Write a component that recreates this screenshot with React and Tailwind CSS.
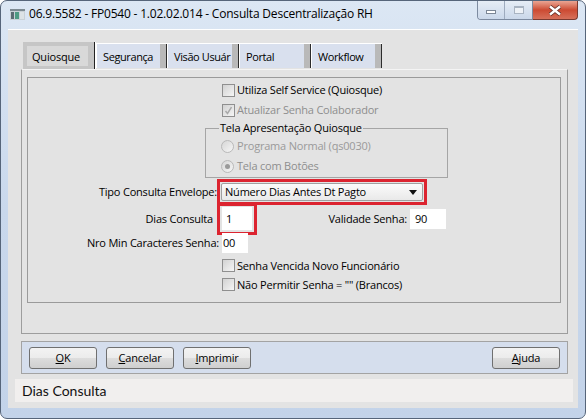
import React from 'react';

const TABS = [
  { label: 'Segurança', w: 'w-[71px]' },
  { label: 'Visão Usuár', w: 'w-[72px]' },
  { label: 'Portal', w: 'w-[72px]' },
  { label: 'Workflow', w: 'w-[71px]' },
];

function Check({ checked, disabled }) {
  return (
    <span className="w-[13px] h-[13px] shrink-0 border border-[#8f8f8f] bg-linear-to-br from-[#d2d2d2] to-[#f5f5f5] flex items-center justify-center">
      {checked && (
        <svg width="9" height="9" viewBox="0 0 9 9">
          <path d="M1.5 5 L3.5 7.5 L7.5 1.2" stroke={disabled ? '#a8a8a8' : '#333'} strokeWidth="1.5" fill="none" />
        </svg>
      )}
    </span>
  );
}

function Radio({ selected }) {
  return (
    <span className="w-[13px] h-[13px] shrink-0 rounded-full border border-[#b9b9b9] bg-linear-to-br from-[#d6d6d6] to-[#f6f6f6] flex items-center justify-center">
      {selected && <span className="w-[5px] h-[5px] rounded-full bg-[#9a9a9a]" />}
    </span>
  );
}

function CheckRow({ label, checked, disabled, className }) {
  return (
    <div className={'flex items-center gap-[2px] ml-[194px] ' + className}>
      <Check checked={checked} disabled={disabled} />
      <span className={disabled ? 'text-[#8e8e8e]' : 'text-black'}>{label}</span>
    </div>
  );
}

function Button({ children, className = '' }) {
  return (
    <div className={'w-[68px] h-[22px] rounded-[3px] border border-[#707070] bg-[linear-gradient(#f3f3f3,#ebebeb_50%,#dddddd_50%,#cfcfcf)] flex items-center justify-center text-black ' + className}>
      {children}
    </div>
  );
}

function Tab({ label, w }) {
  return (
    <div className={'flex h-[25px] mt-[1px] border-t border-l border-white bg-[#d9e0ee] ' + w}>
      <span className="flex-1 whitespace-nowrap pl-[6px] pt-[5px] tracking-[-0.4px]">{label}</span>
      <span className="w-[6px] bg-[#b9b9b9]" />
      <span className="w-[1px] bg-[#2c2c2c]" />
    </div>
  );
}

export default function App() {
  return (
    <div className="w-[588px] h-[420px] bg-white overflow-hidden font-['Open_Sans',sans-serif] text-[11px] tracking-[-0.2px] leading-[16px] text-black">
      <div className="w-[586px] h-[419px] rounded-[7px] border border-[#56657a] bg-linear-to-b from-[#dce7f4] via-[#c9d8ec] to-[#c3d3e9] flex flex-col">
        {/* title bar */}
        <div className="h-[28px] flex items-start pl-[9px] pr-[7px]">
          <svg width="15" height="11" viewBox="0 0 15 11" className="mt-[8px] shrink-0">
            <rect x="0" y="0" width="15" height="11" fill="#c9d1d6" />
            <rect x="0" y="0" width="15" height="2" fill="#7d8a92" />
            <rect x="1" y="3" width="3" height="7" fill="#5b6b72" />
            <rect x="5" y="3" width="4" height="7" fill="#4e9a82" />
            <rect x="10" y="3" width="4" height="7" fill="#dde3e6" />
          </svg>
          <span className="ml-[4px] mt-[4px] text-[12px] tracking-[-0.2px] leading-[18px] whitespace-nowrap">06.9.5582 - FP0540 - 1.02.02.014 - Consulta Descentralização RH</span>
          <div className="ml-auto flex">
            <div className="flex h-[19px] border border-t-0 border-[#7d8ba0] rounded-bl-[4px] overflow-hidden">
              <div className="w-[26px] bg-linear-to-b from-[#e6edf6] to-[#cbd8ea] flex items-center justify-center">
                <span className="mt-[4px] w-[10px] h-[4px] border border-[#7c8796] bg-white" />
              </div>
              <div className="w-[28px] border-l border-[#9eabbe] bg-linear-to-b from-[#e6edf6] to-[#cbd8ea] flex items-center justify-center">
                <span className="w-[10px] h-[8px] border border-[#a9b4c2] border-t-2 bg-[#eef2f7]" />
              </div>
            </div>
            <div className="w-[45px] h-[19px] border border-t-0 border-l-0 border-[#7a3a30] rounded-br-[4px] bg-linear-to-b from-[#e9a593] via-[#cc4a32] to-[#d6705a] flex items-center justify-center">
              <svg width="14" height="11" viewBox="0 0 14 11">
                <path d="M2 1.5 L12 9.5 M12 1.5 L2 9.5" stroke="#5a2a22" strokeWidth="4" />
                <path d="M2 1.5 L12 9.5 M12 1.5 L2 9.5" stroke="#ffffff" strokeWidth="2.4" />
              </svg>
            </div>
          </div>
        </div>

        {/* client */}
        <div className="mx-[7px] h-[379px] bg-[#e3e3e3] border-t border-white flex flex-col">
          {/* tab strip */}
          <div className="flex h-[27px] mt-[12px] ml-[15px]">
            <div className="flex w-[73px] h-[27px]">
              <div className="flex-1 bg-[#c6c6c6] pt-[4px] pl-[4px] pr-[6px] pb-[3px]">
                <div className="h-full bg-[#d9d9d9] pl-[5px] pt-[3px]">Quiosque</div>
              </div>
              <span className="w-[1px] bg-[#222]" />
              <span className="w-[1px] bg-white" />
            </div>
            {TABS.map((t) => <Tab key={t.label} label={t.label} w={t.w} />)}
          </div>

          {/* tab panel */}
          <div className="ml-[13px] w-[547px] h-[265px] border border-[#9d9d9d] border-t-[#f4f4f4] pt-[7px] pl-[5px]">
            <div className="w-[534px] h-[226px] border border-[#9a9a9a] pt-[2px]">
              <CheckRow className="h-[20px]" label="Utiliza Self Service (Quiosque)" />
              <CheckRow className="h-[20px]" label="Atualizar Senha Colaborador" checked disabled />

              <fieldset className="ml-[177px] w-[243px] h-[58px] border border-[#a5a5a5]">
                <legend className="ml-[13px] px-[1px] leading-[16px]">Tela Apresentação Quiosque</legend>
                <div className="flex items-center gap-[3px] h-[20px] ml-[15px] text-[#9a9a9a]">
                  <Radio />
                  <span>Programa Normal (qs0030)</span>
                </div>
                <div className="flex items-center gap-[3px] h-[20px] ml-[15px] text-[#8e8e8e]">
                  <Radio selected />
                  <span>Tela com Botões</span>
                </div>
              </fieldset>

              <div className="flex items-center h-[26px] mt-[1px]">
                <span className="w-[189px] text-right">Tipo Consulta Envelope:</span>
                <div className="w-[210px] h-[26px] border-[3px] border-[#dc2430] p-[1px]">
                  <div className="h-full rounded-[2px] border border-[#a0a0a0] bg-linear-to-b from-[#fbfbfb] to-[#e9e9e9] flex items-center pl-[3px] pr-[5px]">
                    <span className="flex-1">Número Dias Antes Dt Pagto</span>
                    <svg width="8" height="5" viewBox="0 0 8 5"><path d="M0 0 H8 L4 5 Z" fill="#111" /></svg>
                  </div>
                </div>
              </div>

              <div className="flex items-center h-[32px] -mt-[2px]">
                <span className="w-[186px] text-right pr-[1px]">Dias Consulta</span>
                <div className="ml-[3px] w-[40px] h-[32px] border-[3px] border-[#dc2430] px-[2px] pt-[1px]">
                  <div className="h-[23px] bg-white pl-[4px] flex items-center">1</div>
                </div>
                <span className="w-[150px] text-right">Validade Senha:</span>
                <div className="ml-[3px] w-[36px] h-[20px] bg-white pl-[5px] flex items-center">90</div>
              </div>

              <div className="flex items-center h-[20px] -mt-[2px]">
                <span className="w-[191px] text-right">Nro Min Caracteres Senha:</span>
                <div className="ml-[3px] w-[26px] h-[20px] bg-white pl-[1px] flex items-center">00</div>
              </div>

              <CheckRow className="h-[19px] mt-[3px]" label="Senha Vencida Novo Funcionário" />
              <CheckRow className="h-[19px]" label={'Não Permitir Senha = "" (Brancos)'} />
            </div>
          </div>

          {/* buttons */}
          <div className="ml-[13px] mt-[7px] w-[547px] h-[33px] border border-[#a3a3a3] bg-[#d5deed] flex items-start pt-[5px] pl-[7px] pr-[7px] gap-[9px]">
            <Button><span><u>O</u>K</span></Button>
            <Button><span><u>C</u>ancelar</span></Button>
            <Button><span><u>I</u>mprimir</span></Button>
            <Button className="ml-auto"><span><u>A</u>juda</span></Button>
          </div>

          {/* status bar */}
          <div className="ml-[7px] mt-[5px] w-[558px] h-[23px] bg-[#f1efee] pl-[7px] flex items-center font-['Lato',sans-serif] tracking-normal text-[14px] text-[#111]">
            Dias Consulta
          </div>
        </div>
      </div>
    </div>
  );
}
